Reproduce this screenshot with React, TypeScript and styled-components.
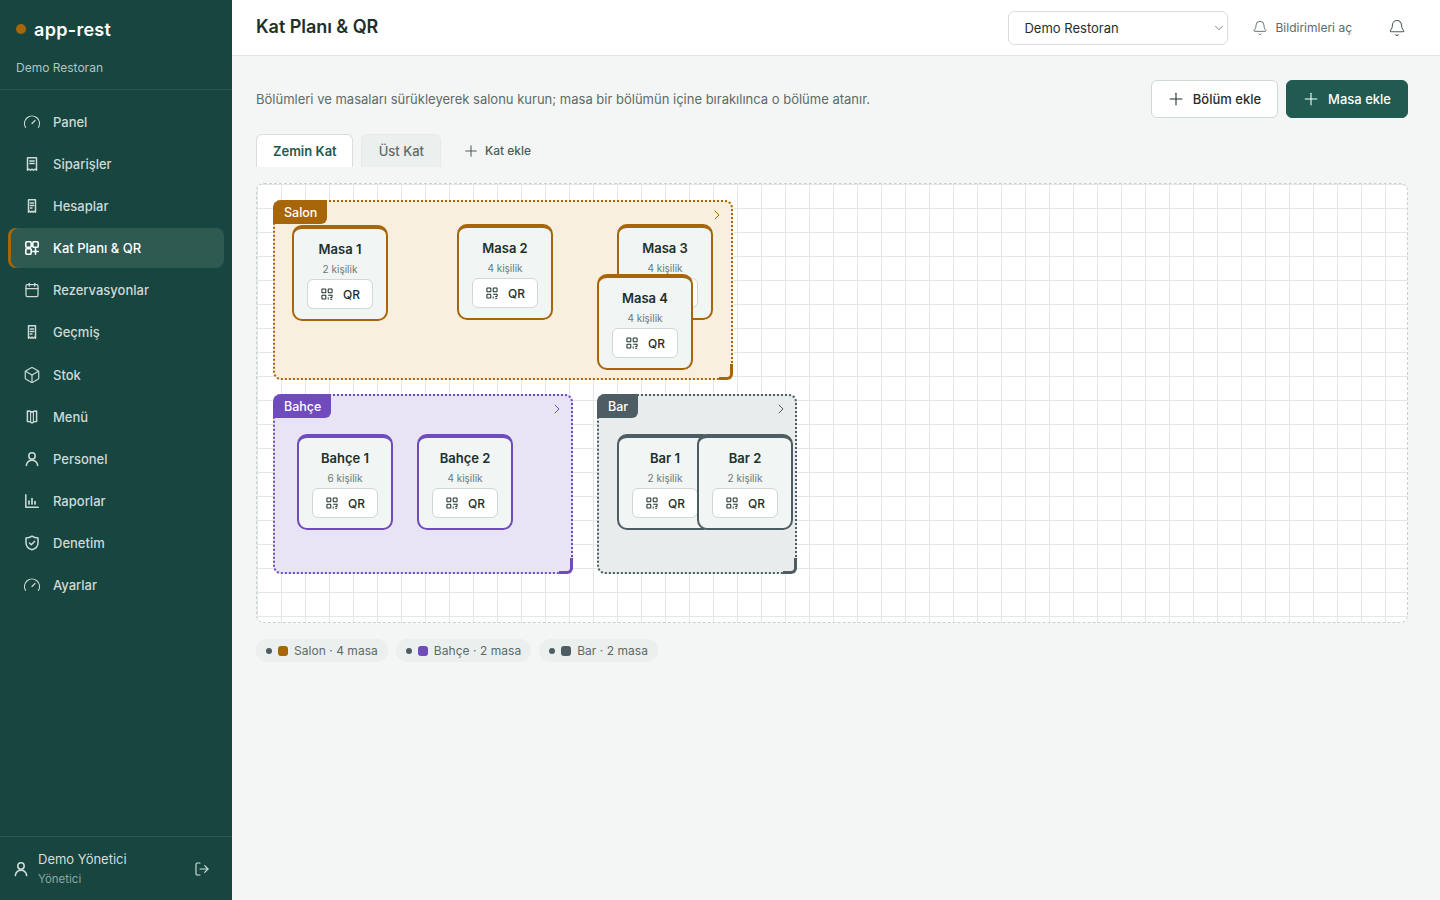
import React from 'react';
import styled, { createGlobalStyle } from 'styled-components';
import { Plus, Bell, ChevronRight, ChevronDown, Gauge, Box, LogOut, Calendar } from 'lucide-react';

const GlobalStyle = createGlobalStyle`
  html, body { margin: 0; padding: 0; height: 100%; }
  body { font-family: Inter, "Liberation Sans", sans-serif; background: #f4f6f5; color: #1d302c; }
  * { box-sizing: border-box; }
`;

const Shell = styled.div`
  display: flex;
  width: 1440px;
  height: 900px;
  overflow: hidden;
`;

const Sidebar = styled.aside`
  width: 232px;
  flex: none;
  display: flex;
  flex-direction: column;
  background: #17453f;
  color: #fff;
`;

const Brand = styled.div`
  height: 90px;
  padding: 18px 16px 0;
  border-bottom: 1px solid #2c5a52;
`;

const BrandRow = styled.div`
  display: flex;
  align-items: center;
  gap: 8px;
  height: 22px;
`;

const BrandDot = styled.span`
  width: 10px;
  height: 10px;
  border-radius: 50%;
  background: #a8660a;
`;

const BrandName = styled.span`
  font-size: 18px;
  font-weight: 600;
  letter-spacing: 0.3px;
`;

const BrandSub = styled.div`
  margin-top: 19px;
  font-size: 12px;
  line-height: 18px;
  color: #b3c4c0;
`;

const Nav = styled.nav`
  flex: 1;
  display: flex;
  flex-direction: column;
  gap: 2px;
  padding: 12px 8px;
`;

const NavItem = styled.a<{ $active?: boolean }>`
  display: flex;
  align-items: center;
  gap: 12px;
  height: 40.09px;
  padding-left: 14px;
  border-radius: 8px;
  font-size: 13px;
  font-weight: 500;
  color: ${p => (p.$active ? '#fff' : '#cfdad7')};
  background: ${p => (p.$active ? '#2f5a52' : 'transparent')};
  box-shadow: ${p => (p.$active ? 'inset 3px 0 0 #a8660a' : 'none')};
`;

const NavIcon = styled.span`
  width: 19px;
  height: 16px;
  display: flex;
  align-items: center;
  justify-content: center;
  flex: none;
`;

const UserBox = styled.div`
  height: 64px;
  display: flex;
  align-items: center;
  padding: 0 22px 0 13px;
  border-top: 1px solid #2c5a52;
  color: #d5dfdc;
`;

const UserText = styled.div`
  flex: 1;
  margin-left: 9px;
`;

const UserName = styled.div`
  font-size: 13px;
  line-height: 19px;
  color: #d5dfdc;
`;

const UserRole = styled.div`
  margin-top: 1px;
  font-size: 11.5px;
  line-height: 18px;
  color: #8fa6a1;
`;

const Main = styled.main`
  flex: 1;
  min-width: 0;
  display: flex;
  flex-direction: column;
`;

const TopBar = styled.header`
  height: 56px;
  flex: none;
  display: flex;
  align-items: center;
  padding: 0 34px 0 24px;
  background: #fff;
  border-bottom: 1px solid #e1e6e4;
`;

const Title = styled.h1`
  flex: 1;
  margin: 0 0 2px;
  font-size: 18px;
  font-weight: 600;
  letter-spacing: -0.05px;
  color: #1d302c;
`;

const SelectWrap = styled.div`
  position: relative;
  width: 220px;
  height: 34px;
  color: #6b7a77;
`;

const SelectBox = styled.select`
  width: 100%;
  height: 100%;
  appearance: none;
  padding: 0 0 0 15px;
  border: 1px solid #d7dedc;
  border-radius: 6px;
  background: #fff;
  color: #1d302c;
  font-family: inherit;
  font-size: 13px;
`;

const SelectCaret = styled.span`
  position: absolute;
  right: 2px;
  top: 10px;
  display: flex;
  pointer-events: none;
`;

const NotifyLink = styled.span`
  display: flex;
  align-items: center;
  gap: 7px;
  margin-left: 24px;
  font-size: 12px;
  color: #5c6b68;
`;

const BellButton = styled.span`
  display: flex;
  margin-left: 36px;
  color: #4d5d5a;
`;

const Content = styled.div`
  padding: 24px 32px 0 24px;
`;

const ActionRow = styled.div`
  display: flex;
  align-items: center;
  justify-content: space-between;
  height: 38px;
`;

const Hint = styled.p`
  margin: 0;
  font-size: 13px;
  color: #5c6b68;
`;

const Actions = styled.div`
  display: flex;
  gap: 8px;
`;

const Button = styled.button<{ $primary?: boolean }>`
  display: flex;
  align-items: center;
  gap: 7px;
  height: 38px;
  padding: 0 16px 0 14px;
  border-radius: 6px;
  border: 1px solid ${p => (p.$primary ? '#205a50' : '#cfd8d6')};
  background: ${p => (p.$primary ? '#205a50' : '#fff')};
  color: ${p => (p.$primary ? '#fff' : '#1d302c')};
  font-family: inherit;
  font-size: 13px;
  font-weight: 500;
`;

const Tabs = styled.div`
  display: flex;
  align-items: center;
  gap: 8px;
  height: 33px;
  margin-top: 16px;
`;

const Tab = styled.div<{ $active?: boolean }>`
  height: 33px;
  display: flex;
  align-items: center;
  padding: ${p => (p.$active ? '0 15px 0 16px' : '0 16px 0 17px')};
  border: 1px solid ${p => (p.$active ? '#d7dedc' : '#e5eae8')};
  border-bottom: 0;
  border-radius: 6px 6px 0 0;
  background: ${p => (p.$active ? '#fff' : '#ebefee')};
  color: ${p => (p.$active ? '#205a50' : '#5c6b68')};
  font-size: 13px;
  font-weight: ${p => (p.$active ? 600 : 500)};
`;

const AddFloor = styled.div`
  display: flex;
  align-items: center;
  gap: 5px;
  padding-left: 13px;
  font-size: 12px;
  font-weight: 500;
  color: #4d5d5a;
`;

const Canvas = styled.div`
  position: relative;
  height: 440px;
  margin-top: 16px;
  border: 1px dashed #c8d1ce;
  border-radius: 8px;
  background-color: #fff;
  background-image:
    linear-gradient(#e3e8e6 1px, transparent 1px),
    linear-gradient(90deg, #e3e8e6 1px, transparent 1px);
  background-size: 24px 24px;
`;

const Section = styled.div<{ $color: string; $bg: string }>`
  position: absolute;
  height: 180px;
  border: 2px dotted ${p => p.$color};
  border-radius: 8px;
  background: ${p => p.$bg};
  color: ${p => p.$color};
`;

const SectionLabel = styled.span<{ $color: string }>`
  position: absolute;
  left: -2px;
  top: -2px;
  height: 24px;
  display: flex;
  align-items: center;
  padding: 0 10px 0 11px;
  border-radius: 8px 0 6px 0;
  background: ${p => p.$color};
  color: #fff;
  font-size: 12.5px;
  font-weight: 500;
`;

const SectionArrow = styled.span`
  position: absolute;
  right: 6px;
  top: 5px;
  display: flex;
`;

const ResizeCorner = styled.span<{ $color: string }>`
  position: absolute;
  right: -2px;
  bottom: -2px;
  width: 14px;
  height: 16px;
  border-right: 3px solid ${p => p.$color};
  border-bottom: 3px solid ${p => p.$color};
  border-bottom-right-radius: 6px;
`;

const TableCard = styled.div<{ $color: string }>`
  position: absolute;
  width: 96px;
  height: 96px;
  display: flex;
  flex-direction: column;
  align-items: center;
  padding-top: 10px;
  border: 2px solid ${p => p.$color};
  border-top-width: 4px;
  border-radius: 10px;
  background: #f1f5f4;
`;

const TableName = styled.div`
  font-size: 13px;
  line-height: 20px;
  font-weight: 600;
  color: #1d302c;
`;

const TableSeats = styled.div`
  margin-top: 2px;
  font-size: 10px;
  line-height: 16px;
  color: #6b7a77;
`;

const QrButton = styled.div`
  display: flex;
  align-items: center;
  justify-content: center;
  gap: 10px;
  width: 66px;
  height: 30px;
  margin-top: 2px;
  padding-left: 1px;
  border: 1px solid #cfd8d6;
  border-radius: 6px;
  background: #fff;
  color: #1d302c;
  font-size: 12px;
  font-weight: 500;
`;

const Legend = styled.div`
  display: flex;
  gap: 8px;
  margin-top: 16px;
`;

const Chip = styled.div`
  height: 23px;
  display: flex;
  align-items: center;
  padding: 0 10px;
  border-radius: 12px;
  background: #ebefee;
  color: #5c6b68;
  font-size: 12px;
  letter-spacing: 0.04px;
`;

const ChipDot = styled.span`
  width: 6px;
  height: 6px;
  margin-right: 6px;
  border-radius: 50%;
  background: #4d5d63;
`;

const ChipSwatch = styled.span<{ $color: string }>`
  width: 10px;
  height: 10px;
  margin-right: 6px;
  border-radius: 3px;
  background: ${p => p.$color};
`;

// hand drawn icons: these don't line up with the lucide ones
const svgProps = {
  fill: 'none',
  stroke: 'currentColor',
  strokeWidth: 1.5,
  strokeLinecap: 'round' as const,
  strokeLinejoin: 'round' as const,
};

const ReceiptWide = () => (
  <svg width="16" height="16" viewBox="0 0 16 16" {...svgProps}>
    <path d="M3.5 1.8h9v12.4l-1.5-1-1.5 1-1.5-1-1.5 1-1.5-1-1.5 1z" />
    <path d="M5.8 5h4.4M5.8 7.5h4.4" />
  </svg>
);

const ReceiptNarrow = () => (
  <svg width="16" height="16" viewBox="0 0 16 16" {...svgProps}>
    <path d="M4.5 1.8h7v12.4l-1.2-1-1.1 1-1.2-1-1.2 1-1.1-1-1.2 1z" />
    <path d="M6.4 5h3.2M6.4 7.5h3.2M6.4 10h1.6" />
  </svg>
);

const FloorIcon = () => (
  <svg width="16" height="16" viewBox="0 0 16 16" {...svgProps} strokeWidth={1.6}>
    <rect x="1.8" y="1.8" width="5.4" height="5.4" rx="1" />
    <rect x="8.8" y="1.8" width="5.4" height="5.4" rx="1" />
    <rect x="1.8" y="8.8" width="5.4" height="5.4" rx="1" />
    <path d="M8.8 11.5h5.4M11.5 8.8v5.4" />
  </svg>
);

const BookIcon = () => (
  <svg width="16" height="16" viewBox="0 0 16 16" {...svgProps}>
    <path d="M8 3.2C7 2.4 5 2 3.4 2v10.6c1.6 0 3.6.4 4.6 1.4 1-1 3-1.4 4.6-1.4V2C11 2 9 2.4 8 3.2z" />
    <path d="M6.6 3v10M9.4 3v10" strokeWidth={1.1} />
  </svg>
);

const BarsIcon = () => (
  <svg width="16" height="16" viewBox="0 0 16 16" {...svgProps}>
    <path d="M1.8 1.8v12.4h12.4" />
    <path d="M5 11V8M8 11V5.5M11 11V8.5" strokeWidth={1.7} />
  </svg>
);

const PersonIcon = () => (
  <svg width="16" height="16" viewBox="0 0 16 16" {...svgProps}>
    <circle cx="8" cy="5" r="3.2" />
    <path d="M2.3 14.5c.6-3.2 2.9-5.2 5.7-5.2s5.1 2 5.7 5.2" />
  </svg>
);

const ShieldIcon = () => (
  <svg width="16" height="16" viewBox="0 0 16 16" {...svgProps}>
    <path d="M8 1.2c1.8 1.2 3.8 1.8 6 1.9v4.6c0 3.4-2.4 5.9-6 7.1-3.6-1.2-6-3.7-6-7.1V3.1c2.2-.1 4.2-.7 6-1.9z" />
    <path d="M5.5 8l1.8 1.8 3.2-3.4" />
  </svg>
);

const QrIcon = () => (
  <svg width="12" height="12" viewBox="0 0 13 13" fill="none" stroke="currentColor" strokeWidth="1.1">
    <rect x="1" y="1" width="4.2" height="4.2" rx="0.6" />
    <rect x="7.8" y="1" width="4.2" height="4.2" rx="0.6" />
    <rect x="1" y="7.8" width="4.2" height="4.2" rx="0.6" />
    <path d="M7.8 7.8h4.2v2M7.8 10.2V12.4M10 10.4h2.2M10 12.2h2.2" />
  </svg>
);

type NavEntry = { label: string; icon: React.ReactNode; active?: boolean };

const navItems: NavEntry[] = [
  { label: 'Panel', icon: <Gauge size={18} strokeWidth={1.6} /> },
  { label: 'Siparişler', icon: <ReceiptWide /> },
  { label: 'Hesaplar', icon: <ReceiptNarrow /> },
  { label: 'Kat Planı & QR', icon: <FloorIcon />, active: true },
  { label: 'Rezervasyonlar', icon: <Calendar size={16} strokeWidth={1.9} /> },
  { label: 'Geçmiş', icon: <ReceiptNarrow /> },
  { label: 'Stok', icon: <Box size={18} strokeWidth={1.6} /> },
  { label: 'Menü', icon: <BookIcon /> },
  { label: 'Personel', icon: <PersonIcon /> },
  { label: 'Raporlar', icon: <BarsIcon /> },
  { label: 'Denetim', icon: <ShieldIcon /> },
  { label: 'Ayarlar', icon: <Gauge size={18} strokeWidth={1.6} /> },
];

const SALON = '#a8660a';
const BAHCE = '#6f4bbd';
const BAR = '#4d5d63';

type TableEntry = { name: string; seats: number; x: number; y: number };
type SectionEntry = {
  name: string;
  color: string;
  bg: string;
  x: number;
  y: number;
  w: number;
  tables: TableEntry[];
};

const sections: SectionEntry[] = [
  {
    name: 'Salon', color: SALON, bg: '#f8efdf', x: 16, y: 16, w: 460,
    tables: [
      { name: 'Masa 1', seats: 2, x: 17, y: 23 },
      { name: 'Masa 2', seats: 4, x: 182, y: 22 },
      { name: 'Masa 3', seats: 4, x: 342, y: 22 },
      { name: 'Masa 4', seats: 4, x: 322, y: 72 },
    ],
  },
  {
    name: 'Bahçe', color: BAHCE, bg: '#e9e4f4', x: 16, y: 210, w: 300,
    tables: [
      { name: 'Bahçe 1', seats: 6, x: 22, y: 38 },
      { name: 'Bahçe 2', seats: 4, x: 142, y: 38 },
    ],
  },
  {
    name: 'Bar', color: BAR, bg: '#e8ecec', x: 340, y: 210, w: 200,
    tables: [
      { name: 'Bar 1', seats: 2, x: 18, y: 38 },
      { name: 'Bar 2', seats: 2, x: 98, y: 38 },
    ],
  },
];

export default function App() {
  return (
    <>
      <GlobalStyle />
      <Shell>
        <Sidebar>
          <Brand>
            <BrandRow>
              <BrandDot />
              <BrandName>app-rest</BrandName>
            </BrandRow>
            <BrandSub>Demo Restoran</BrandSub>
          </Brand>
          <Nav>
            {navItems.map(item => (
              <NavItem key={item.label} $active={item.active}>
                <NavIcon>{item.icon}</NavIcon>
                {item.label}
              </NavItem>
            ))}
          </Nav>
          <UserBox>
            <PersonIcon />
            <UserText>
              <UserName>Demo Yönetici</UserName>
              <UserRole>Yönetici</UserRole>
            </UserText>
            <LogOut size={16} strokeWidth={1.7} />
          </UserBox>
        </Sidebar>
        <Main>
          <TopBar>
            <Title>Kat Planı &amp; QR</Title>
            <SelectWrap>
              <SelectBox defaultValue="demo">
                <option value="demo">Demo Restoran</option>
              </SelectBox>
              <SelectCaret>
                <ChevronDown size={14} strokeWidth={1.5} />
              </SelectCaret>
            </SelectWrap>
            <NotifyLink>
              <Bell size={16} strokeWidth={1.4} />
              Bildirimleri aç
            </NotifyLink>
            <BellButton>
              <Bell size={18} strokeWidth={1.4} />
            </BellButton>
          </TopBar>
          <Content>
            <ActionRow>
              <Hint>Bölümleri ve masaları sürükleyerek salonu kurun; masa bir bölümün içine bırakılınca o bölüme atanır.</Hint>
              <Actions>
                <Button>
                  <Plus size={20} strokeWidth={1.3} />
                  Bölüm ekle
                </Button>
                <Button $primary>
                  <Plus size={20} strokeWidth={1.3} />
                  Masa ekle
                </Button>
              </Actions>
            </ActionRow>
            <Tabs>
              <Tab $active>Zemin Kat</Tab>
              <Tab>Üst Kat</Tab>
              <AddFloor>
                <Plus size={18} strokeWidth={1.4} />
                Kat ekle
              </AddFloor>
            </Tabs>
            <Canvas>
              {sections.map(s => (
                <Section
                  key={s.name}
                  $color={s.color}
                  $bg={s.bg}
                  style={{ left: s.x, top: s.y, width: s.w }}
                >
                  <SectionLabel $color={s.color}>{s.name}</SectionLabel>
                  <SectionArrow>
                    <ChevronRight size={16} strokeWidth={1.5} />
                  </SectionArrow>
                  <ResizeCorner $color={s.color} />
                  {s.tables.map(t => (
                    <TableCard key={t.name} $color={s.color} style={{ left: t.x, top: t.y }}>
                      <TableName>{t.name}</TableName>
                      <TableSeats>{t.seats} kişilik</TableSeats>
                      <QrButton>
                        <QrIcon />
                        QR
                      </QrButton>
                    </TableCard>
                  ))}
                </Section>
              ))}
            </Canvas>
            <Legend>
              <Chip><ChipDot /><ChipSwatch $color={SALON} />Salon · 4 masa</Chip>
              <Chip><ChipDot /><ChipSwatch $color={BAHCE} />Bahçe · 2 masa</Chip>
              <Chip><ChipDot /><ChipSwatch $color={BAR} />Bar · 2 masa</Chip>
            </Legend>
          </Content>
        </Main>
      </Shell>
    </>
  );
}
